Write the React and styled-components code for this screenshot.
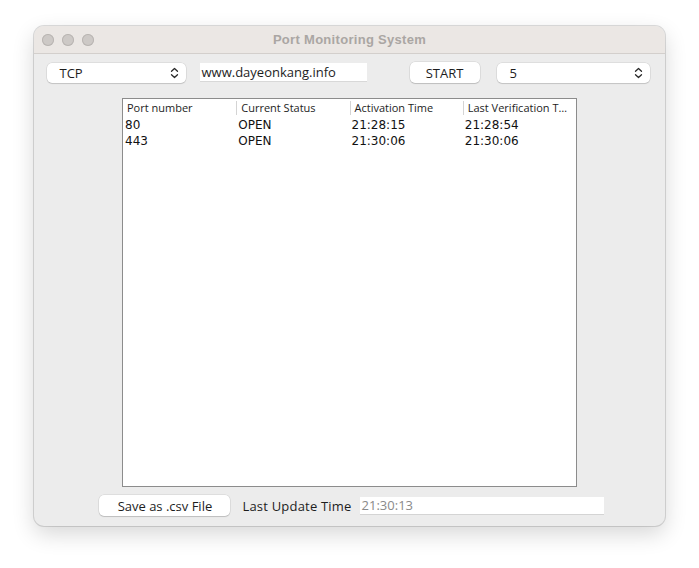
import React from "react";
import styled, { createGlobalStyle } from "styled-components";

const GlobalStyle = createGlobalStyle`
  html, body {
    margin: 0;
    padding: 0;
    background: #ffffff;
  }
  body {
    font-family: "Liberation Sans", Arial, sans-serif;
  }
`;

const Page = styled.div`
  width: 699px;
  height: 568px;
  padding: 26px 0 0 34px;
  box-sizing: border-box;
`;

const Window = styled.div`
  width: 631px;
  height: 500px;
  border-radius: 10px;
  background: #ececec;
  box-shadow: 0 0 0 1px rgba(0, 0, 0, 0.13), 0 8px 22px rgba(0, 0, 0, 0.16);
  overflow: hidden;
  display: flex;
  flex-direction: column;
`;

const TitleBar = styled.div`
  height: 28px;
  flex-shrink: 0;
  background: #ebe7e4;
  border-bottom: 1px solid #d3cfcc;
  box-sizing: border-box;
  display: flex;
  align-items: center;
  position: relative;
`;

const Lights = styled.div`
  display: flex;
  gap: 8px;
  padding-left: 8px;
`;

const Light = styled.span`
  width: 12px;
  height: 12px;
  border-radius: 50%;
  background: #cdc9c6;
  box-shadow: inset 0 0 0 1px #b9b5b2;
`;

const Title = styled.div`
  position: absolute;
  left: 0;
  right: 0;
  text-align: center;
  font-size: 13px;
  letter-spacing: 0.3px;
  font-weight: bold;
  color: #aaa6a3;
  pointer-events: none;
`;

const Content = styled.div`
  flex: 1;
  display: flex;
  flex-direction: column;
  align-items: center;
  padding-top: 8px;
`;

const Toolbar = styled.div`
  display: flex;
  align-items: center;
  height: 21px;
  margin-left: -3px;
`;

const Combo = styled.div`
  width: ${(p) => p.$w}px;
  height: 20px;
  margin-left: ${(p) => p.$ml || 0}px;
  background: #ffffff;
  border-radius: 5px;
  box-shadow: 0 0 0 0.5px rgba(0, 0, 0, 0.12), 0 1px 1px rgba(0, 0, 0, 0.12);
  display: flex;
  align-items: center;
  justify-content: space-between;
  padding: 0 7px 0 13px;
  box-sizing: border-box;
  font-family: "Open Sans", "Liberation Sans", sans-serif;
  font-size: 13px;
  color: #1d1d1d;
`;

const TextField = styled.div`
  width: 167px;
  height: 19px;
  margin-left: 14px;
  background: #ffffff;
  border-bottom: 1px solid #d8d8d8;
  box-sizing: border-box;
  padding-left: 2px;
  display: flex;
  align-items: center;
  font-family: "Open Sans", "Liberation Sans", sans-serif;
  font-size: 13px;
  color: #1d1d1d;
`;

const Button = styled.button`
  width: ${(p) => p.$w}px;
  height: 21px;
  margin-left: ${(p) => p.$ml || 0}px;
  background: #ffffff;
  border: none;
  border-radius: 5px;
  box-shadow: 0 0 0 0.5px rgba(0, 0, 0, 0.12), 0 1px 1px rgba(0, 0, 0, 0.14);
  font-family: "Open Sans", "Liberation Sans", sans-serif;
  font-size: 13px;
  color: #1d1d1d;
  padding: 0;
  cursor: default;
`;

const Chevron = () => (
  <svg width="9" height="12" viewBox="0 0 9 12" fill="none">
    <path
      d="M1.5 4.3 L4.5 1.5 L7.5 4.3 M1.5 7.7 L4.5 10.5 L7.5 7.7"
      stroke="#2a2a2a"
      strokeWidth="1.3"
      strokeLinecap="round"
      strokeLinejoin="round"
    />
  </svg>
);

const Table = styled.div`
  width: 455px;
  height: 389px;
  margin-top: 15px;
  background: #ffffff;
  border: 1px solid #8c8c8c;
  box-sizing: border-box;
  display: flex;
  flex-direction: column;
  font-family: "DejaVu Sans", "Liberation Sans", sans-serif;
`;

const HeaderRow = styled.div`
  display: grid;
  grid-template-columns: repeat(4, minmax(0, 1fr));
  height: 18px;
  padding-top: 1px;
  box-sizing: border-box;
  font-size: 11px;
  color: #1d1d1d;
  font-family: "Open Sans", "Liberation Sans", sans-serif;
`;

const HeaderCell = styled.div`
  padding: 0 8px 0 4px;
  line-height: 14px;
  height: 14px;
  white-space: nowrap;
  overflow: hidden;
  text-overflow: ellipsis;
  border-left: ${(p) => (p.$first ? "none" : "1px solid #d4d4d4")};
  margin-top: 1px;
`;

const Row = styled.div`
  display: grid;
  grid-template-columns: repeat(4, minmax(0, 1fr));
  height: 16px;
  font-size: 12px;
  color: #111;
`;

const Cell = styled.div`
  padding-left: 2px;
  line-height: 16px;
  white-space: nowrap;
`;

const Footer = styled.div`
  display: flex;
  align-items: center;
  margin-top: 8px;
  margin-left: 4px;
`;

const Label = styled.span`
  margin-left: 12px;
  font-family: "Open Sans", "Liberation Sans", sans-serif;
  font-size: 13px;
  letter-spacing: 0.2px;
  color: #1d1d1d;
`;

const TimeField = styled.div`
  width: 244px;
  height: 18px;
  margin-left: 8px;
  background: #ffffff;
  border-bottom: 1px solid #d4d4d4;
  box-sizing: border-box;
  padding-left: 2px;
  display: flex;
  align-items: center;
  font-family: "Open Sans", "Liberation Sans", sans-serif;
  font-size: 13px;
  color: #8a8a8a;
`;

const columns = [
  "Port number",
  "Current Status",
  "Activation Time",
  "Last Verification Time",
];

const rows = [
  ["80", "OPEN", "21:28:15", "21:28:54"],
  ["443", "OPEN", "21:30:06", "21:30:06"],
];

export default function App() {
  return (
    <>
      <GlobalStyle />
      <Page>
        <Window>
          <TitleBar>
            <Lights>
              <Light />
              <Light />
              <Light />
            </Lights>
            <Title>Port Monitoring System</Title>
          </TitleBar>
          <Content>
            <Toolbar>
              <Combo $w={139}>
                <span>TCP</span>
                <Chevron />
              </Combo>
              <TextField>www.dayeonkang.info</TextField>
              <Button $w={70} $ml={43}>
                START
              </Button>
              <Combo $w={153} $ml={17}>
                <span>5</span>
                <Chevron />
              </Combo>
            </Toolbar>
            <Table>
              <HeaderRow>
                {columns.map((c, i) => (
                  <HeaderCell key={c} $first={i === 0}>
                    {c}
                  </HeaderCell>
                ))}
              </HeaderRow>
              {rows.map((r) => (
                <Row key={r[0]}>
                  {r.map((v, i) => (
                    <Cell key={i}>{v}</Cell>
                  ))}
                </Row>
              ))}
            </Table>
            <Footer>
              <Button $w={131}>Save as .csv File</Button>
              <Label>Last Update Time</Label>
              <TimeField>21:30:13</TimeField>
            </Footer>
          </Content>
        </Window>
      </Page>
    </>
  );
}
